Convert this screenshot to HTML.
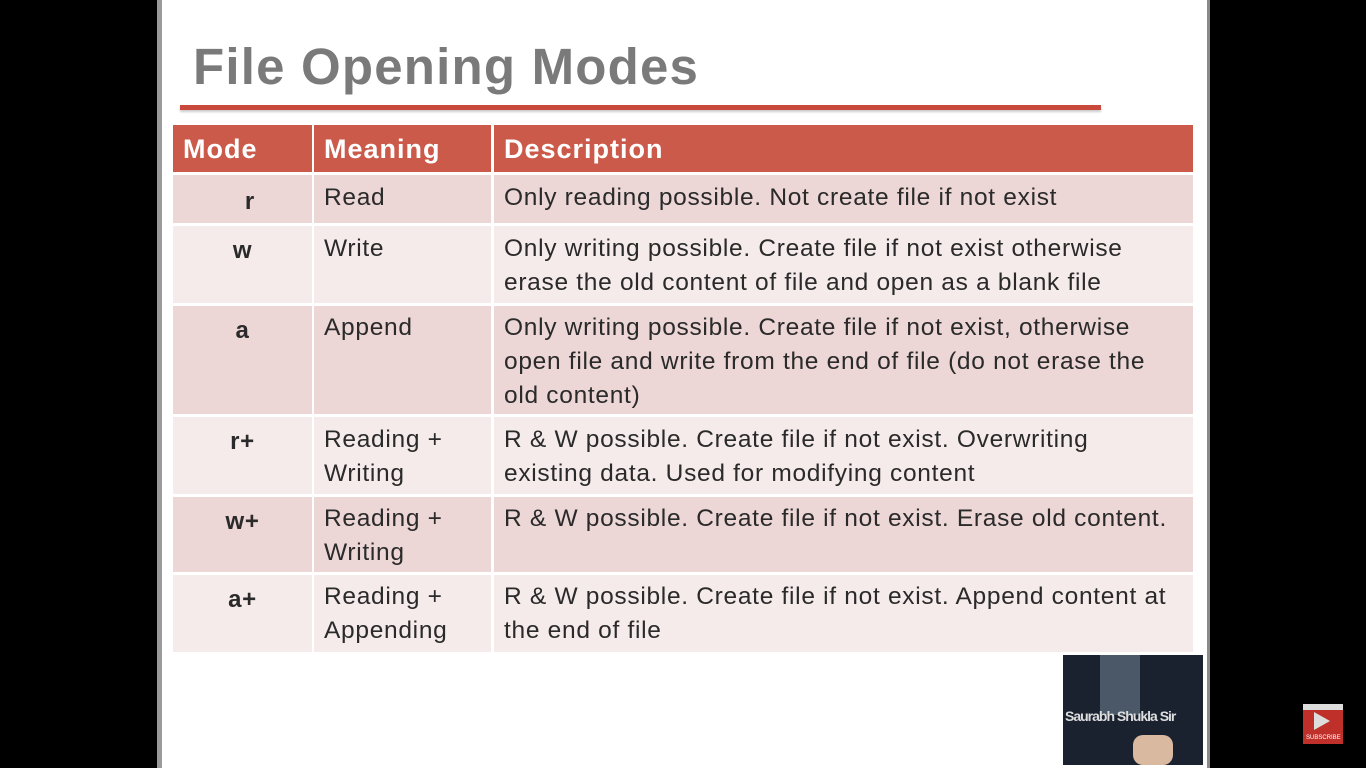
<!DOCTYPE html>
<html><head><style>
body{margin:0;width:1366px;height:768px;background:#000;position:relative;overflow:hidden;font-family:"Liberation Sans",sans-serif}
.slide{position:absolute;left:157px;top:0;width:1053px;height:768px;background:#fff;border-left:5px solid #9a9a9a;border-right:3px solid #8a8a8a;box-sizing:border-box}
.t{position:absolute;left:193px;top:37px;font-size:51px;font-weight:bold;color:#7a7a7a;letter-spacing:1.2px}
.line{position:absolute;left:180px;top:105px;width:921px;height:5px;background:#c94a3c;box-shadow:0 2px 2px #ccc}
.c{position:absolute;box-sizing:border-box;font-size:24.5px;color:#2a2a2a;line-height:34px;padding:8px 0 0 10px;letter-spacing:0.7px;white-space:nowrap}
.h{background:#cb5a4a;color:#fff;font-weight:bold;font-size:27px;padding:7px 0 0 10px;letter-spacing:1px}
.o{background:#ecd6d6}.e{background:#f6ebeb}
.m{text-align:center;font-weight:bold;padding-left:0;font-size:24px}
</style></head><body>
<div class="slide"></div>
<div class="t">File Opening Modes</div>
<div class="line"></div>

<div class="c h" style="left:173px;top:125px;width:139px;height:47px">Mode</div>
<div class="c h" style="left:314px;top:125px;width:177px;height:47px">Meaning</div>
<div class="c h" style="left:494px;top:125px;width:699px;height:47px">Description</div>

<div class="c o m" style="left:173px;top:175px;width:139px;height:48px;padding-top:10px">&nbsp;&nbsp;r</div>
<div class="c o" style="left:314px;top:175px;width:177px;height:48px;padding-top:6px">Read</div>
<div class="c o" style="left:494px;top:175px;width:699px;height:48px;padding-top:6px">Only reading possible. Not create file if not exist</div>

<div class="c e m" style="left:173px;top:226px;width:139px;height:77px">w</div>
<div class="c e" style="left:314px;top:226px;width:177px;height:77px;padding-top:6px">Write</div>
<div class="c e" style="left:494px;top:226px;width:699px;height:77px;padding-top:6px">Only writing possible. Create file if not exist otherwise<br>erase the old content of file and open as a blank file</div>

<div class="c o m" style="left:173px;top:306px;width:139px;height:108px">a</div>
<div class="c o" style="left:314px;top:306px;width:177px;height:108px;padding-top:5px">Append</div>
<div class="c o" style="left:494px;top:306px;width:699px;height:108px;padding-top:5px">Only writing possible. Create file if not exist, otherwise<br>open file and write from the end of file (do not erase the<br>old content)</div>

<div class="c e m" style="left:173px;top:417px;width:139px;height:77px">r+</div>
<div class="c e" style="left:314px;top:417px;width:177px;height:77px;padding-top:6px">Reading +<br>Writing</div>
<div class="c e" style="left:494px;top:417px;width:699px;height:77px;padding-top:6px">R &amp; W possible. Create file if not exist. Overwriting<br>existing data. Used for modifying content</div>

<div class="c o m" style="left:173px;top:497px;width:139px;height:75px">w+</div>
<div class="c o" style="left:314px;top:497px;width:177px;height:75px;padding-top:5px">Reading +<br>Writing</div>
<div class="c o" style="left:494px;top:497px;width:699px;height:75px;padding-top:5px">R &amp; W possible. Create file if not exist. Erase old content.</div>

<div class="c e m" style="left:173px;top:575px;width:139px;height:77px">a+</div>
<div class="c e" style="left:314px;top:575px;width:177px;height:77px;padding-top:5px">Reading +<br>Appending</div>
<div class="c e" style="left:494px;top:575px;width:699px;height:77px;padding-top:5px">R &amp; W possible. Create file if not exist. Append content at<br>the end of file</div>

<div style="position:absolute;left:1063px;top:655px;width:140px;height:110px;background:#1a2230"></div>
<div style="position:absolute;left:1100px;top:655px;width:40px;height:60px;background:#4a5868"></div>
<div style="position:absolute;left:1065px;top:708px;font-size:14px;font-weight:bold;color:#ddd;letter-spacing:-1px">Saurabh Shukla Sir</div>
<div style="position:absolute;left:1133px;top:735px;width:40px;height:30px;background:#d9b9a0;border-radius:10px"></div>

<div style="position:absolute;left:1303px;top:704px;width:40px;height:40px;background:#c0302a"></div>
<div style="position:absolute;left:1303px;top:704px;width:40px;height:6px;background:#ddd"></div>
<div style="position:absolute;left:1314px;top:712px;width:0;height:0;border-left:16px solid #ddd;border-top:9px solid transparent;border-bottom:9px solid transparent"></div>
<div style="position:absolute;left:1306px;top:735px;font-size:6px;color:#fff">SUBSCRIBE</div>
</body></html>
